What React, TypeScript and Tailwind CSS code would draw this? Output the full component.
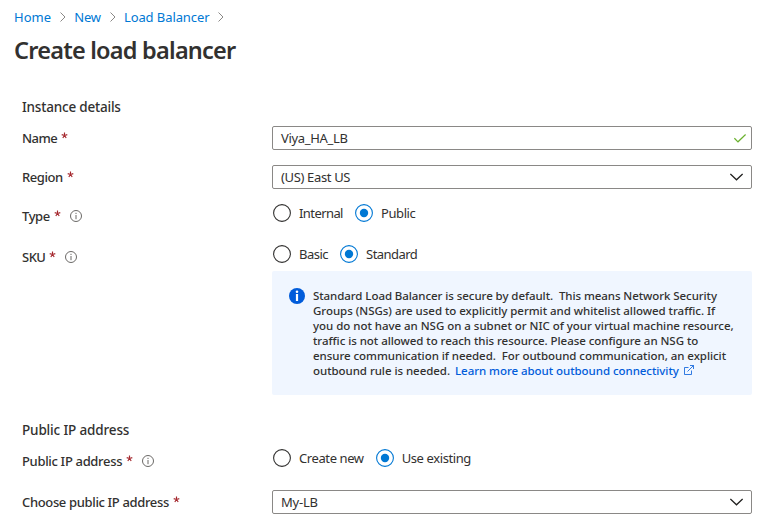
import React from "react";

function Crumb({ children, className }: { children: string; className: string }) {
  return (
    <div className="flex items-center">
      <a className={`mr-2 whitespace-nowrap text-[#0078d4] ${className}`}>{children}</a>
      <svg className="ml-px shrink-0" width="6" height="10" viewBox="0 0 6 10" fill="none" stroke="#8a8886" strokeWidth="1">
        <path d="M0.5 0.5L5 5L0.5 9.5" />
      </svg>
    </div>
  );
}

function InfoIcon() {
  return (
    <svg className="shrink-0" width="12" height="12" viewBox="0 0 12 12" fill="none">
      <circle cx="6" cy="6" r="5.5" stroke="#6b6967" />
      <path d="M6 5V9.2M6 2.8V4" stroke="#6b6967" />
    </svg>
  );
}

function Label({ text, className, star, info }: { text: string; className: string; star: string; info?: string }) {
  return (
    <div className="flex h-5 items-center text-[13px] font-medium">
      <span className={`whitespace-nowrap ${className}`}>{text}</span>
      <svg className={`mb-[5px] shrink-0 ${star}`} width="7" height="7" viewBox="0 0 7 7" stroke="#a4262c" strokeWidth="1.15">
        <path d="M3.5 0.6V3.5M0.7 2.6L3.5 3.5L6.3 2.6M1.8 6L3.5 3.5L5.2 6" fill="none" />
      </svg>
      {info && (
        <div className={info}>
          <InfoIcon />
        </div>
      )}
    </div>
  );
}

function Radio({ label, checked, className }: { label: string; checked?: boolean; className: string }) {
  return (
    <div className="flex items-center gap-2">
      <svg width="18" height="18" viewBox="0 0 18 18" className="shrink-0">
        <circle cx="9" cy="9" r="8.4" fill="white" stroke={checked ? "#0078d4" : "#323130"} strokeWidth="1.1" />
        {checked && <circle cx="9" cy="9" r="4.2" fill="#0078d4" />}
      </svg>
      <span className={`whitespace-nowrap ${className}`}>{label}</span>
    </div>
  );
}

function Field({ value, className, valid }: { value: string; className: string; valid?: boolean }) {
  return (
    <div className="flex h-6 w-[480px] items-center justify-between rounded-[2px] border border-[#8a8886] bg-white pl-2">
      <span className={`whitespace-nowrap ${className}`}>{value}</span>
      {valid ? (
        <svg className="mr-[5px]" width="12" height="9" viewBox="0 0 12 9" fill="none" stroke="#6bb12f" strokeWidth="1.2">
          <path d="M0.4 4.2L4 7.8L11.6 0.5" />
        </svg>
      ) : (
        <svg className="mr-2" width="13" height="8" viewBox="0 0 13 8" fill="none" stroke="#201f1e" strokeWidth="1.25">
          <path d="M0.4 0.9L6.5 6.8L12.6 0.9" />
        </svg>
      )}
    </div>
  );
}

export default function App() {
  return (
    <div className="h-[523px] w-[760px] overflow-hidden bg-white font-['Noto_Sans','Open_Sans',sans-serif] text-[13px] leading-5 text-[#323130]">
      <nav className="flex h-[34px] items-center gap-2 pl-[14px]">
        <Crumb className="tracking-[0.05px]">Home</Crumb>
        <Crumb className="tracking-[-0.15px]">New</Crumb>
        <Crumb className="tracking-[-0.09px]">Load Balancer</Crumb>
      </nav>
      <h1 className="flex h-8 items-center pl-[14px] text-[23.5px] font-[600] tracking-[-0.77px] whitespace-nowrap">
        Create load balancer
      </h1>

      <section className="pt-[31px] pl-[22px]">
        <h2 className="text-[13.5px] font-medium tracking-[-0.2px]">Instance details</h2>
        <div className="mt-[9px] grid grid-cols-[250px_480px]">
          <div className="pt-[2px]">
            <Label text="Name" className="tracking-[-0.5px]" star="ml-1" />
          </div>
          <Field value="Viya_HA_LB" className="tracking-[-0.33px]" valid />
        </div>
        <div className="mt-[15px] grid grid-cols-[250px_480px]">
          <div className="pt-[2px]">
            <Label text="Region" className="tracking-[-0.43px]" star="ml-1" />
          </div>
          <Field value="(US) East US" className="tracking-[-0.35px]" />
        </div>
        <div className="mt-[15px] grid grid-cols-[250px_480px]">
          <div className="pt-[2px]">
            <Label text="Type" className="tracking-[-0.4px]" star="ml-1" info="ml-[9px]" />
          </div>
          <div className="flex h-[18px] gap-3 pl-px">
            <Radio label="Internal" className="tracking-[-0.58px]" />
            <Radio label="Public" className="tracking-[-0.38px]" checked />
          </div>
        </div>
        <div className="mt-[19px] grid grid-cols-[250px_480px]">
          <div className="pt-[2px]">
            <Label text="SKU" className="tracking-[-0.5px]" star="ml-1" info="ml-[9px]" />
          </div>
          <div>
            <div className="flex h-[18px] gap-3 pl-px">
              <Radio label="Basic" className="tracking-[-0.5px]" />
              <Radio label="Standard" className="tracking-[-0.55px]" checked />
            </div>
            <div className="mt-2 flex h-[124px] gap-2 rounded-[2px] bg-[#f0f6ff] pt-[17px] pl-[17px]">
              <svg className="shrink-0" width="16" height="16" viewBox="0 0 16 16">
                <circle cx="8" cy="8" r="8" fill="#015cda" />
                <circle cx="8" cy="3.8" r="1.3" fill="white" />
                <rect x="6.9" y="6" width="2.2" height="7" fill="white" />
              </svg>
              <div className="text-[11.5px] leading-[15px] font-medium whitespace-nowrap">
                <div className="tracking-[-0.07px]">Standard Load Balancer is secure by default.&nbsp; This means Network Security</div>
                <div className="tracking-[-0.03px]">Groups (NSGs) are used to explicitly permit and whitelist allowed traffic. If</div>
                <div className="tracking-[-0.03px]">you do not have an NSG on a subnet or NIC of your virtual machine resource,</div>
                <div className="tracking-[-0.05px]">traffic is not allowed to reach this resource. Please configure an NSG to</div>
                <div className="tracking-[-0.05px]">ensure communication if needed.&nbsp; For outbound communication, an explicit</div>
                <div className="flex">
                  <span className="tracking-[-0.05px]">outbound rule is needed.</span>
                  <a className="ml-[5px] tracking-[-0.05px] text-[#015cda]">Learn more about outbound connectivity</a>
                  <svg className="mt-[2px] ml-[5px]" width="10" height="10" viewBox="0 0 10 10" fill="none" stroke="#015cda" strokeWidth="0.8">
                    <path d="M4.5 2.5H0.5V9.5H7.5V5.5M6 0.5H9.5V4M9.5 0.5L3.5 6.5" />
                  </svg>
                </div>
              </div>
            </div>
          </div>
        </div>
      </section>

      <section className="pt-[25px] pl-[22px]">
        <h2 className="text-[13.5px] font-medium tracking-[-0.15px]">Public IP address</h2>
        <div className="mt-[9px] grid grid-cols-[250px_480px]">
          <div className="pt-[2px]">
            <Label text="Public IP address" className="tracking-[-0.33px]" star="ml-1" info="ml-[9px]" />
          </div>
          <div className="flex h-[18px] gap-3 pl-px">
            <Radio label="Create new" className="tracking-[-0.4px]" />
            <Radio label="Use existing" className="tracking-[-0.4px]" checked />
          </div>
        </div>
        <div className="mt-[19px] grid grid-cols-[250px_480px]">
          <div className="pt-[2px]">
            <Label text="Choose public IP address" className="tracking-[-0.35px]" star="ml-1" />
          </div>
          <Field value="My-LB" className="tracking-[-0.2px]" />
        </div>
      </section>
    </div>
  );
}
